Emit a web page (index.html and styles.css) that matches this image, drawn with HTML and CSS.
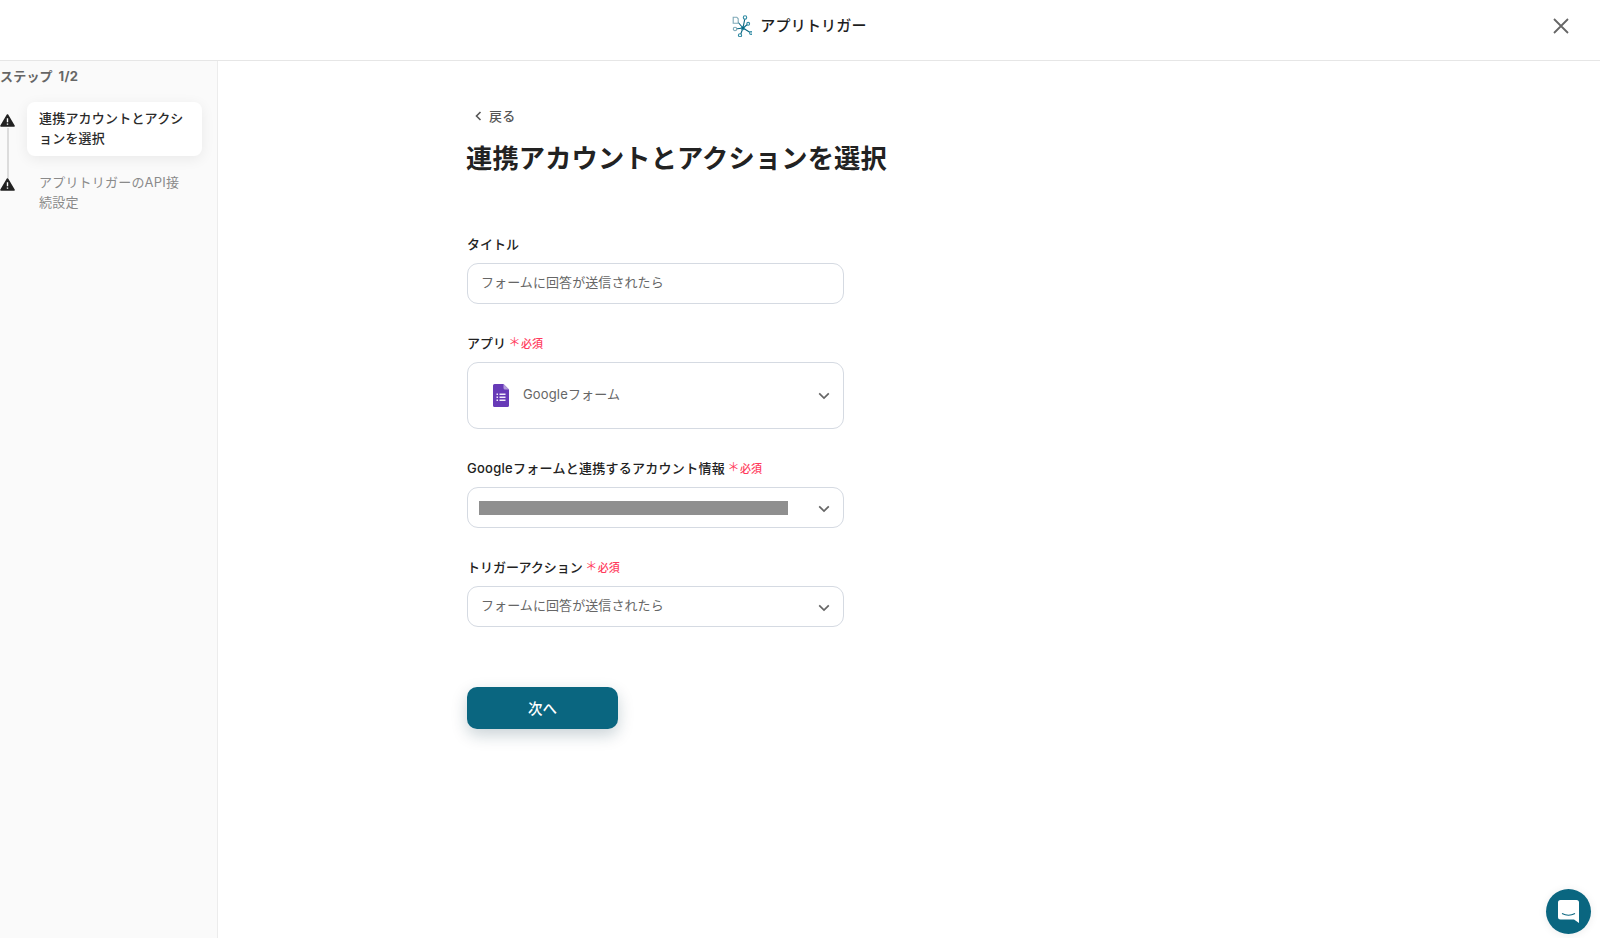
FILE: index.html
```html
<!DOCTYPE html>
<html lang="ja">
<head>
<meta charset="utf-8">
<title>アプリトリガー</title>
<link rel="stylesheet" href="styles.css">
</head>
<body>
<header class="topbar">
  <div class="topbar-spacer"></div>
  <div class="brand">
    <svg class="brand-icon" width="20" height="22" viewBox="0 0 20 22" fill="none" stroke="#2f8aa3" stroke-width="1.1">
      <path d="M11 13 13 2.8M11 13 16 9M11 13 3.5 14M11 13 8 21M11 13 19 18M11 13 5 6" stroke="#0a6680"/>
      <path d="M1.2 2.2h3.6l1.4 1.6v4.4h-5z" stroke="#7fa9b8" fill="#fff"/>
      <circle cx="13" cy="2.500" r="1.700" fill="#fff"/>
      <circle cx="16.200" cy="8.800" r="1.400" fill="#fff"/>
      <circle cx="3" cy="14" r="1.700" fill="#fff" stroke="#7fa9b8"/>
      <circle cx="8" cy="20.300" r="1.600" fill="#fff"/>
      <circle cx="19" cy="18" r="1.400" fill="#fff"/>
      <circle cx="11" cy="13" r="1.700" fill="#0a6680"/>
    </svg>
    <span class="brand-name">アプリトリガー</span>
  </div>
  <div class="topbar-end">
    <svg class="close-icon" width="16" height="16" viewBox="0 0 16 16" fill="none" stroke="#666" stroke-width="1.8">
      <path d="M1 1 15 15M15 1 1 15"/>
    </svg>
  </div>
</header>

<div class="layout">
  <aside class="sidebar">
    <div class="step-count">ステップ 1/2</div>
    <ol class="steps">
      <li class="step step-active">
        <svg class="warn" width="15" height="13" viewBox="0 0 15 13">
          <path d="M7.500 1 14 12H1z" fill="#222" stroke="#222" stroke-width="1.600" stroke-linejoin="round"/>
          <path d="M7.500 4.200v4M7.500 9.400v1.300" stroke="#fff" stroke-width="1.400"/>
        </svg>
        <div class="step-text">連携アカウントとアクションを選択</div>
      </li>
      <li class="step">
        <svg class="warn" width="15" height="13" viewBox="0 0 15 13">
          <path d="M7.500 1 14 12H1z" fill="#222" stroke="#222" stroke-width="1.600" stroke-linejoin="round"/>
          <path d="M7.500 4.200v4M7.500 9.400v1.300" stroke="#fff" stroke-width="1.400"/>
        </svg>
        <div class="step-text">アプリトリガーのAPI接続設定</div>
      </li>
    </ol>
  </aside>

  <main class="content">
    <div class="back">
      <svg class="back-icon" width="7" height="10" viewBox="0 0 7 10" fill="none" stroke="#555" stroke-width="1.600">
        <path d="M5.500 1 1.500 5l4 4"/>
      </svg>
      <span>戻る</span>
    </div>
    <h1 class="page-title">連携アカウントとアクションを選択</h1>

    <form class="form">
      <div class="field">
        <div class="label">タイトル</div>
        <div class="control"><span class="value">フォームに回答が送信されたら</span></div>
      </div>

      <div class="field">
        <div class="label">アプリ<span class="req"><span class="req-star">＊</span>必須</span></div>
        <div class="control control-app">
          <svg class="forms-icon" width="16" height="23" viewBox="0 0 16 23">
            <path d="M1.500 0H10.500L16 5.500V21.500A1.500 1.500 0 0 1 14.500 23H1.500A1.500 1.500 0 0 1 0 21.500V1.500A1.500 1.500 0 0 1 1.500 0Z" fill="#673ab7"/>
            <path d="M10.500 0 16 5.500H12A1.500 1.500 0 0 1 10.500 4Z" fill="#b39ddb"/>
            <path d="M3.500 9.500h1.500v1.500H3.500zM6.500 9.500h6v1.500h-6zM3.500 12.500h1.500V14H3.500zM6.500 12.500h6V14h-6zM3.500 15.500h1.500V17H3.500zM6.500 15.500h6V17h-6z" fill="#f1ecf9"/>
          </svg>
          <span class="value app-name">Googleフォーム</span>
          <svg class="chevron" width="12" height="8" viewBox="0 0 12 8" fill="none" stroke="#666" stroke-width="1.700"><path d="M1.200 1.400 6 6l4.800-4.600"/></svg>
        </div>
      </div>

      <div class="field">
        <div class="label label-long">Googleフォームと連携するアカウント情報<span class="req"><span class="req-star">＊</span>必須</span></div>
        <div class="control control-account">
          <div class="redacted"></div>
          <svg class="chevron chevron-low" width="12" height="8" viewBox="0 0 12 8" fill="none" stroke="#666" stroke-width="1.700"><path d="M1.200 1.400 6 6l4.800-4.600"/></svg>
        </div>
      </div>

      <div class="field">
        <div class="label">トリガーアクション<span class="req"><span class="req-star">＊</span>必須</span></div>
        <div class="control">
          <span class="value">フォームに回答が送信されたら</span>
          <svg class="chevron chevron-low" width="12" height="8" viewBox="0 0 12 8" fill="none" stroke="#666" stroke-width="1.700"><path d="M1.200 1.400 6 6l4.800-4.600"/></svg>
        </div>
      </div>

      <button class="next" type="button">次へ</button>
    </form>
  </main>
</div>

<div class="chat">
  <svg width="21" height="23" viewBox="0 0 21 23">
    <path d="M2.500 0H18.500A2.500 2.500 0 0 1 21 2.500V23L16 19.500H2.500A2.500 2.500 0 0 1 0 17V2.500A2.500 2.500 0 0 1 2.500 0Z" fill="#fff"/>
    <path d="M4 13.500Q10.500 17 17 13.500" fill="none" stroke="#0a6680" stroke-width="1.100"/>
  </svg>
</div>
</body>
</html>
```

FILE: styles.css
```css
* { box-sizing: border-box; }

html, body {
  margin: 0;
  height: 100%;
}

body {
  height: 938px;
  overflow: hidden;
  display: flex;
  flex-direction: column;
  background: #fff;
  color: #222;
  font-family: Inter, "Noto Sans CJK JP", "Noto Sans", sans-serif;
  font-size: 13px;
}

.topbar {
  flex: none;
  height: 61px;
  display: grid;
  grid-template-columns: 1fr auto 1fr;
  align-items: center;
  border-bottom: 1px solid #e6e6e6;
  padding-bottom: 10px;
}

.brand {
  display: flex;
  align-items: center;
  gap: 8px;
  padding-top: 2px;
  padding-right: 1px;
}

.brand-name {
  font-size: 15px;
  font-weight: 500;
  line-height: 22px;
  letter-spacing: 0.2px;
  color: #1e1e1e;
}

.brand-icon,
.close-icon { display: block; }

.topbar-end {
  display: flex;
  justify-content: flex-end;
  padding-right: 31px;
  padding-top: 2px;
}

.layout {
  flex: 1;
  display: flex;
  min-height: 0;
}

.sidebar {
  flex: none;
  width: 218px;
  background: #fafafa;
  border-right: 1px solid #ececec;
  padding-top: 5px;
}

.step-count {
  font-size: 13px;
  font-weight: 700;
  line-height: 20px;
  letter-spacing: 0.2px;
  word-spacing: 2.5px;
  color: #666;
}

.steps {
  list-style: none;
  margin: 16px 0 0;
  padding: 0;
  display: flex;
  flex-direction: column;
  gap: 9px;
}

.step {
  position: relative;
  display: flex;
  align-items: flex-start;
  gap: 12px;
}

.step-active::after {
  content: "";
  position: absolute;
  left: 7px;
  top: 26px;
  width: 2px;
  height: 50px;
  background: #dcdcdc;
}

.warn {
  flex: none;
  display: block;
  margin-top: 12px;
}

.step-text {
  width: 175px;
  padding: 6px 12px 8px;
  border-radius: 8px;
  font-size: 13px;
  line-height: 20px;
  letter-spacing: 0.2px;
  color: #8a8a8a;
}

.step + .step .warn { margin-top: 13px; }

.step + .step .step-text { padding: 7px 12px; }

.step-active .step-text {
  background: #fff;
  color: #2a2a2a;
  font-weight: 500;
  box-shadow: 0 3px 14px rgba(0, 0, 0, 0.07);
}

.content {
  flex: 1;
  padding: 45px 0 0 249px;
}

.back {
  display: flex;
  align-items: center;
  gap: 7px;
  padding-left: 8px;
  font-size: 13px;
  font-weight: 500;
  line-height: 20px;
  letter-spacing: 0.3px;
  color: #555;
}

.back-icon { display: block; }

.page-title {
  margin: 15px 0 0 -1px;
  font-size: 26.25px;
  font-weight: 700;
  line-height: 36px;
  letter-spacing: 0.13px;
  color: #222;
}

.form {
  width: 377px;
  margin-top: 57px;
  display: flex;
  flex-direction: column;
  gap: 29px;
}

.label {
  display: flex;
  align-items: center;
  height: 21px;
  margin-bottom: 8px;
  padding-bottom: 2px;
  font-size: 13px;
  font-weight: 500;
  color: #222;
  white-space: nowrap;
}

.label-long { letter-spacing: 0.27px; }

.req {
  display: flex;
  align-items: center;
  margin-left: 2px;
  font-size: 11px;
  font-weight: 500;
  letter-spacing: 0;
  color: #ff3b5c;
}

.req-star {
  width: 13px;
  text-align: center;
  font-size: 12px;
  font-weight: 400;
  line-height: 14px;
}

.control {
  display: flex;
  align-items: center;
  justify-content: space-between;
  height: 41px;
  padding: 0 13px 0 13px;
  border: 1px solid #d5dae2;
  border-radius: 11px;
  background: #fff;
  font-size: 13px;
  color: #666;
}

.value {
  margin-bottom: 4px;
  letter-spacing: 0.08px;
}

.control-app {
  height: 67px;
  padding-left: 25px;
  justify-content: flex-start;
}

.forms-icon {
  flex: none;
  display: block;
  margin-right: 14px;
}

.app-name {
  flex: 1;
  letter-spacing: 0.15px;
}

.control-account { padding-left: 11px; }

.redacted {
  width: 309px;
  height: 14px;
  background: #8f8f8f;
}

.chevron {
  flex: none;
  display: block;
}

.chevron-low { margin-top: 2px; }

.next {
  align-self: flex-start;
  width: 151px;
  height: 42px;
  margin-top: 31px;
  padding: 0 0 2px;
  border: 0;
  border-radius: 10px;
  background: #0a6680;
  color: #fff;
  font: inherit;
  font-size: 14.5px;
  font-weight: 500;
  box-shadow: 0 6px 16px rgba(10, 50, 70, 0.22);
}

.chat {
  position: fixed;
  left: 1546px;
  top: 889px;
  width: 45px;
  height: 45px;
  border-radius: 50%;
  background: #0a6680;
  display: flex;
  align-items: center;
  justify-content: center;
  box-shadow: 0 1px 8px rgba(0, 0, 0, 0.08);
}
```
